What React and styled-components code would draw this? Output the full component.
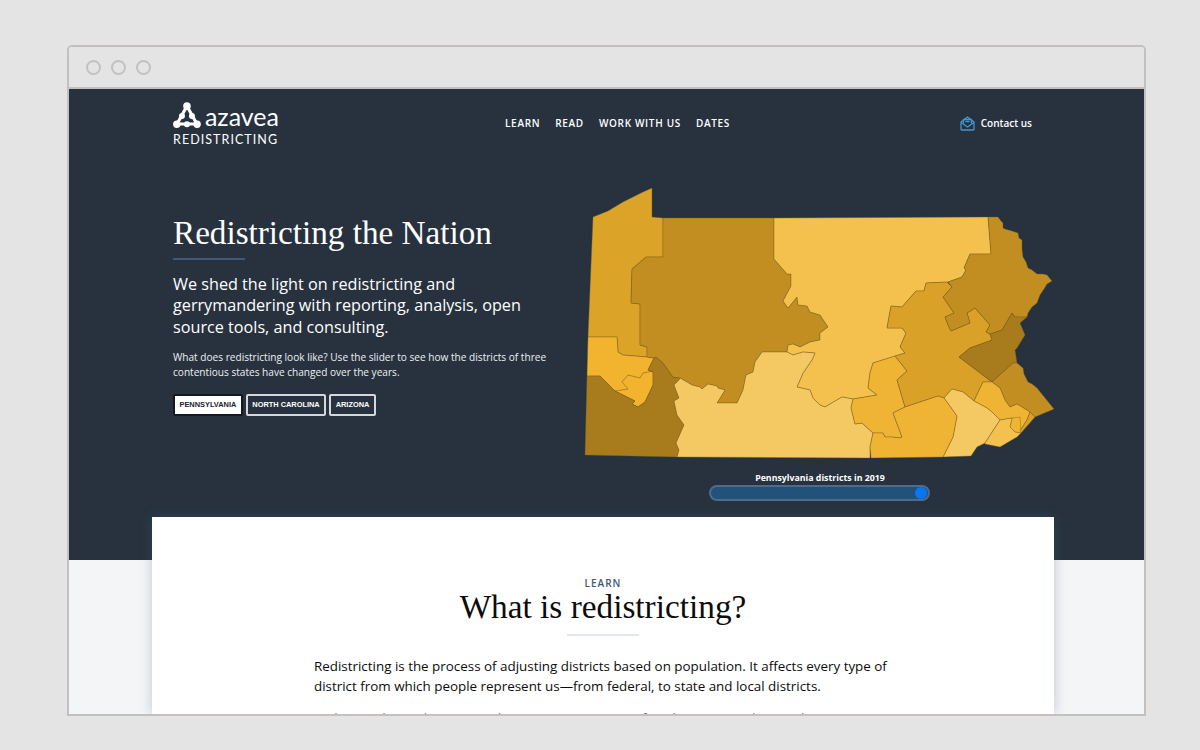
import React from 'react';
import styled, { createGlobalStyle } from 'styled-components';

const navy = '#27323e';
const sans = '"Open Sans", "Noto Sans", sans-serif';
const serif = '"Liberation Serif", "DejaVu Serif", serif';

const GlobalStyle = createGlobalStyle`
    html, body {
        margin: 0;
        height: 100%;
        background: #e4e4e4;
        overflow: hidden;
    }
`;

const Page = styled.div`
    height: 750px;
    padding: 45px 54px 34px 67px;
    box-sizing: border-box;
`;

const Frame = styled.div`
    height: 100%;
    display: flex;
    flex-direction: column;
    box-sizing: border-box;
    border: 2px solid #c4c0c0;
    border-radius: 5px 5px 0 0;
    overflow: hidden;
    background: #f4f5f7;
`;

const Chrome = styled.div`
    height: 40px;
    flex: none;
    display: flex;
    align-items: center;
    gap: 10px;
    padding-left: 17px;
    background: #e4e4e4;
    border-bottom: 2px solid #c4c0c0;
`;

const Dot = styled.span`
    width: 11px;
    height: 11px;
    border: 2px solid #c4c0c0;
    border-radius: 50%;
`;

const Hero = styled.section`
    height: 471px;
    flex: none;
    box-sizing: border-box;
    padding: 0 112px 0 104px;
    background: ${navy};
    color: #fff;
    font-family: ${sans};
`;

const Header = styled.header`
    height: 70px;
    padding-top: 12px;
    display: flex;
    align-items: flex-start;
`;

const Logo = styled.div`
    width: 106px;
    display: flex;
    flex-direction: column;
`;

const LogoTop = styled.div`
    display: flex;
    align-items: flex-end;
    gap: 4px;
    height: 28px;
`;

const LogoWord = styled.span`
    font-family: "Lato", sans-serif;
    font-size: 25px;
    line-height: 25px;
`;

const LogoSub = styled.span`
    margin-top: 3px;
    font-family: "Lato", sans-serif;
    font-size: 12.5px;
    line-height: 15px;
    letter-spacing: 1.05px;
    white-space: nowrap;
`;

const Nav = styled.nav`
    margin-left: 226px;
    margin-top: 15px;
    display: flex;
    gap: 15px;
`;

const NavLink = styled.a`
    font-size: 10px;
    line-height: 14px;
    font-weight: 600;
    letter-spacing: 0.68px;
`;

const Contact = styled.a`
    margin-left: auto;
    margin-top: 14px;
    display: flex;
    align-items: center;
    gap: 6px;
    font-size: 10px;
    line-height: 16px;
    font-weight: 600;
`;

const HeroBody = styled.div`
    display: flex;
    align-items: flex-start;
`;

const Intro = styled.div`
    width: 408px;
    flex: none;
    padding-top: 44px;
`;

const HeroTitle = styled.h1`
    margin: 0;
    font-family: ${serif};
    font-size: 33.2px;
    line-height: 36px;
    font-weight: 400;
    white-space: nowrap;
`;

const Rule = styled.div`
    width: 72px;
    height: ${props => props.light ? '2px' : '1.5px'};
    background: ${props => props.light ? '#e3e7ec' : '#3f5a78'};
    margin: ${props => props.light ? '10px auto 0' : '7px 0 14px'};
`;

const Lead = styled.p`
    width: 360px;
    margin: 0 0 11px;
    font-size: 16.2px;
    line-height: 21.7px;
`;

const Note = styled.p`
    margin: 0 0 14px;
    font-size: 10.1px;
    line-height: 15px;
    color: #eef0f2;
`;

const Buttons = styled.div`
    display: flex;
    gap: 3px;
`;

const StateButton = styled.button`
    height: 22px;
    padding: 0 4.5px;
    box-sizing: border-box;
    border: 2px solid ${props => props.active ? '#12181f' : '#d4d8dc'};
    border-radius: 2px;
    background: ${props => props.active ? '#fff' : navy};
    color: ${props => props.active ? '#1c232b' : '#fff'};
    font-family: "Liberation Sans", Arial, sans-serif;
    font-size: 7.4px;
    font-weight: 700;
`;

const MapColumn = styled.div`
    margin-left: -1px;
    display: flex;
    flex-direction: column;
    align-items: center;
`;

const MapSvg = styled.svg`
    display: block;
    width: 480px;
    height: 285px;
    margin-top: 9px;
    filter: drop-shadow(0 0 1px #16304e);
`;

const District = styled.polygon`
    fill: ${props => props.color};
    stroke: #7d5c15;
    stroke-opacity: 0.5;
    stroke-width: 0.8;
    stroke-linejoin: round;
`;

const Seam = styled.polyline`
    fill: none;
    stroke: #7d5c15;
    stroke-opacity: 0.7;
    stroke-width: 0.8;
`;

const SliderLabel = styled.div`
    margin-top: 7px;
    font-size: 8.8px;
    line-height: 13px;
    font-weight: 700;
`;

const SliderTrack = styled.div`
    width: 221px;
    height: 16px;
    margin-right: 1px;
    box-sizing: border-box;
    border: 2px solid #4d6c8c;
    border-radius: 8px;
    background: #22527a;
    display: flex;
    justify-content: flex-end;
    align-items: center;
    padding-right: 1px;
`;

const SliderThumb = styled.span`
    width: 12px;
    height: 12px;
    border-radius: 50%;
    background: #0a75f0;
`;

const Card = styled.article`
    flex: 1;
    width: 902px;
    margin: -43px 0 0 83px;
    position: relative;
    overflow: hidden;
    background: #fff;
    box-shadow: 0 0 12px rgba(70, 100, 130, 0.3);
    font-family: ${sans};
`;

const Eyebrow = styled.div`
    margin-top: 59px;
    text-align: center;
    font-size: 10px;
    line-height: 14px;
    font-weight: 600;
    letter-spacing: 1px;
    color: #3f5a78;
`;

const CardTitle = styled.h2`
    margin: 0;
    text-align: center;
    font-family: ${serif};
    font-size: 33.3px;
    line-height: 34px;
    font-weight: 400;
    color: #0c0c0c;
`;

const Copy = styled.div`
    width: 590px;
    margin: 20px 0 0 162px;
`;

const Paragraph = styled.p`
    margin: 0 0 12px;
    font-size: 13.4px;
    line-height: 20px;
    color: ${props => props.muted ? '#777' : '#0c0c0c'};
`;

const districts = [
    ['#dba428', '593,217 608,211 623,202 643,192 652,188 652,217 663,218 663,257 646,257 632,269 631,303 640,304 640,345 647,347 647,357 623,355 618,352 617,337 588,337'],
    ['#f2b32f', '588,337 617,337 618,352 623,355 647,357 654,358 648,370 653,372 653,385 645,402 638,407 632,404 635,401 615,391 600,376 587,376'],
    ['#a87c1c', '587,376 600,376 615,391 635,401 632,404 638,407 645,402 653,385 653,372 648,370 654,358 656,357 663,363 673,377 680,378 679,380 674,385 679,398 674,401 677,415 684,425 676,443 679,450 677,457 585,455'],
    ['#c28e22', '663,218 774,218 774,259 787,274 791,274 791,286 783,301 788,308 797,297 798,305 807,306 810,312 820,315 828,327 820,333 820,340 810,342 800,347 793,344 788,345 787,352 762,352 755,362 753,372 746,375 743,390 737,403 717,403 725,390 718,388 717,386 708,384 702,389 700,387 692,385 687,382 680,378 673,377 663,363 656,357 654,358 647,357 647,347 640,345 640,304 631,303 632,269 646,257 663,257'],
    ['#f4c14f', '774,218 988,217 991,254 970,254 964,268 966,270 962,277 948,282 926,283 924,291 916,291 902,307 891,306 887,328 902,328 906,333 900,347 905,353 873,363 870,373 868,388 877,395 853,399 842,397 825,407 820,405 813,398 810,390 797,387 803,373 812,360 815,353 803,352 793,355 787,352 788,345 793,344 800,347 810,342 820,340 820,333 828,327 820,315 810,312 807,306 798,305 797,297 788,308 783,301 791,286 791,274 787,274 774,259'],
    ['#f4c964', '680,378 687,382 692,385 700,387 702,389 708,384 717,386 718,388 725,390 717,403 737,403 743,390 746,375 753,372 755,362 762,352 787,352 793,355 803,352 815,353 812,360 803,373 797,387 810,390 813,398 820,405 825,407 842,397 853,399 851,408 855,424 862,423 873,433 870,447 870,458 677,457 679,450 676,443 684,425 677,415 674,401 679,398 674,385 679,380'],
    ['#f0b435', '873,363 895,356 907,371 897,380 905,407 893,413 902,437 900,438 892,437 885,437 883,433 873,433 862,423 855,424 851,408 853,399 877,395 868,388 870,373'],
    ['#d9a128', '891,306 902,307 916,291 924,291 926,283 947,282 952,287 943,297 954,313 945,317 948,325 951,331 970,323 967,313 975,308 990,325 986,332 990,334 992,340 970,348 959,357 992,382 983,382 974,401 963,392 952,389 944,398 938,396 905,407 897,380 907,371 895,356 905,353 900,347 906,333 902,328 887,328'],
    ['#c28e22', '988,217 998,217 1001,221 1003,223 1003,228 1005,229 1012,231 1018,233 1019,238 1022,240 1022,249 1023,257 1026,262 1028,268 1032,270 1037,274 1043,274 1047,275 1052,281 1047,284 1044,289 1040,295 1037,303 1032,307 1028,313 1027,317 1015,317 1012,313 1002,330 990,334 986,332 990,325 975,308 967,313 970,323 951,331 948,325 945,317 954,313 943,297 952,287 948,282 962,277 966,270 964,268 970,254 991,254'],
    ['#a87c1c', '970,348 992,340 990,334 1002,330 1012,313 1015,317 1027,317 1020,323 1025,335 1017,348 1015,350 1017,363 1013,363 992,382 959,357'],
    ['#c28e22', '992,382 1013,363 1017,363 1023,368 1024,374 1028,382 1032,384 1037,388 1054,409 1035,417 1030,412 1017,404 1010,407 1005,400 1000,388'],
    ['#f0b435', '983,382 992,382 1000,388 1005,400 1010,407 1017,404 1030,412 1027,420 1020,431 1021,433 1015,432 1010,427 1012,418 1000,420 992,412 987,408 974,401'],
    ['#f0b435', '1012,418 1020,417 1021,433 1015,432 1010,427'],
    ['#d9a128', '1030,412 1035,417 1021,433 1020,431 1027,420'],
    ['#f4c964', '944,398 952,389 963,392 974,401 987,408 992,412 1000,420 985,443 977,447 971,456 943,457 953,437 957,416'],
    ['#f0b435', '905,407 938,396 944,398 957,416 953,437 943,457 871,458 870,447 873,433 883,433 885,437 892,437 900,438 902,437 893,413'],
    ['#f4c14f', '1000,420 1012,418 1010,427 1015,432 1021,433 1017,437 1000,447 985,444 985,443'],
];

const LogoMark = () => (
    <svg width="28" height="27" viewBox="0 0 28 27" fill="#fff" stroke="#fff">
        <path d="M14 4 L8.5 14 L4 22 H24 L19.5 14 Z" strokeWidth="3.2" fill="none" strokeLinejoin="round" />
        <circle cx="14" cy="4" r="3.8" stroke="none" />
        <circle cx="9" cy="14" r="3" stroke="none" />
        <circle cx="19" cy="14" r="3" stroke="none" />
        <circle cx="3.8" cy="22.3" r="3.7" stroke="none" />
        <circle cx="14" cy="22.3" r="3" stroke="none" />
        <circle cx="24.2" cy="22.3" r="3.7" stroke="none" />
    </svg>
);

const MailIcon = () => (
    <svg width="15" height="15" viewBox="0 0 15 15" fill="none" stroke="#3f97d3" strokeWidth="1.3" strokeLinejoin="round">
        <path d="M1 6 L7.5 1 L14 6 V13.5 A1 1 0 0 1 13 14 H2 A1 1 0 0 1 1 13.5 Z" />
        <path d="M1 6.5 L7.5 11 L14 6.5" />
        <path d="M3.5 7.5 V3.5 H11.5 V7.5" />
        <path d="M5.5 5.5 H9.5" />
    </svg>
);

const App = () => (
    <Page>
        <GlobalStyle />
        <Frame>
            <Chrome>
                <Dot />
                <Dot />
                <Dot />
            </Chrome>
            <Hero>
                <Header>
                    <Logo>
                        <LogoTop>
                            <LogoMark />
                            <LogoWord>azavea</LogoWord>
                        </LogoTop>
                        <LogoSub>REDISTRICTING</LogoSub>
                    </Logo>
                    <Nav>
                        <NavLink>LEARN</NavLink>
                        <NavLink>READ</NavLink>
                        <NavLink>WORK WITH US</NavLink>
                        <NavLink>DATES</NavLink>
                    </Nav>
                    <Contact>
                        <MailIcon />
                        Contact us
                    </Contact>
                </Header>
                <HeroBody>
                    <Intro>
                        <HeroTitle>Redistricting the Nation</HeroTitle>
                        <Rule />
                        <Lead>
                            We shed the light on redistricting and gerrymandering with reporting, analysis, open source tools, and consulting.
                        </Lead>
                        <Note>
                            What does redistricting look like? Use the slider to see how the districts of three contentious states have changed over the years.
                        </Note>
                        <Buttons>
                            <StateButton active>PENNSYLVANIA</StateButton>
                            <StateButton>NORTH CAROLINA</StateButton>
                            <StateButton>ARIZONA</StateButton>
                        </Buttons>
                    </Intro>
                    <MapColumn>
                        <MapSvg viewBox="580 180 480 285">
                            {districts.map(([color, points]) => (
                                <District key={points} color={color} points={points} />
                            ))}
                            <Seam points="615,391 628,389 622,382 628,375 640,378 643,373 653,371" />
                        </MapSvg>
                        <SliderLabel>Pennsylvania districts in 2019</SliderLabel>
                        <SliderTrack>
                            <SliderThumb />
                        </SliderTrack>
                    </MapColumn>
                </HeroBody>
            </Hero>
            <Card>
                <Eyebrow>LEARN</Eyebrow>
                <CardTitle>What is redistricting?</CardTitle>
                <Rule light />
                <Copy>
                    <Paragraph>
                        Redistricting is the process of adjusting districts based on population. It affects every type of district from which people represent us—from federal, to state and local districts.
                    </Paragraph>
                    <Paragraph muted>
                        In the US, district lines are redrawn every ten years after the census, when each state gets a new count.
                    </Paragraph>
                </Copy>
            </Card>
        </Frame>
    </Page>
);

export default App;
